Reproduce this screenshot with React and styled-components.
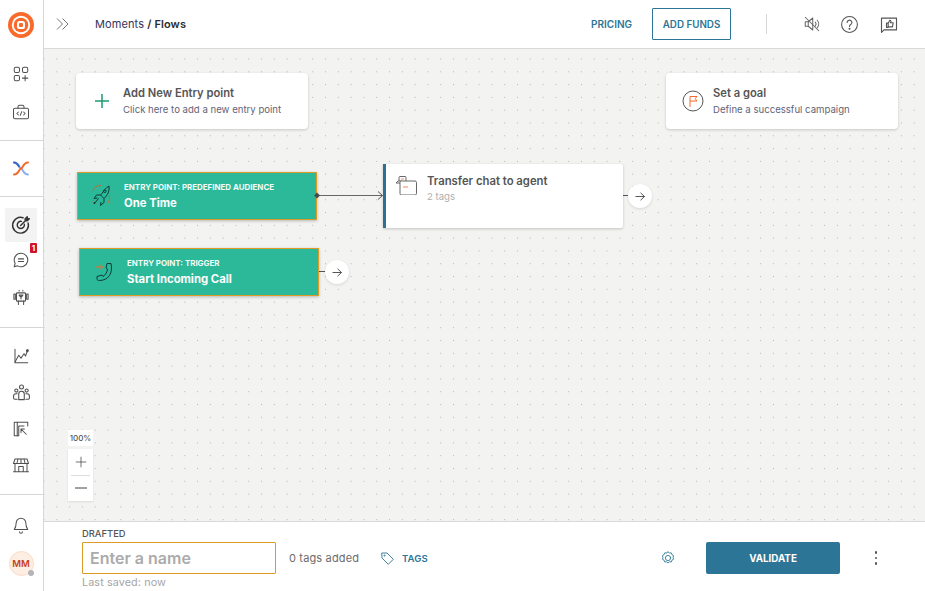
import React from "react";
import styled, { createGlobalStyle } from "styled-components";

const Global = createGlobalStyle`
  html, body { margin: 0; padding: 0; height: 100%; overflow: hidden; background: #fff; }
  #root { height: 100%; }
  * { box-sizing: border-box; }
  body { font-family: Inter, "Liberation Sans", sans-serif; color: #4a4a4a; }
`;

const Shell = styled.div`display: flex; width: 925px; height: 591px;`;
const Sidebar = styled.nav`width: 44px; flex: none; display: flex; flex-direction: column; border-right: 1px solid #d6d6d6; background: #fff;`;
const SideGroup = styled.div`
  height: ${p => p.$h}px; padding-top: ${p => p.$pt || 0}px; flex: none;
  display: flex; flex-direction: column; align-items: center;
  border-bottom: ${p => (p.$last ? "none" : "1px solid #d6d6d6")};
`;
const SideItem = styled.div`
  position: relative; width: 32px; height: ${p => p.$h || 37}px; flex: none; border-radius: 2px;
  display: flex; align-items: center; justify-content: center;
  background: ${p => (p.$active ? "#f3f3f3" : "transparent")};
  margin-left: -1px;
`;
const Badge = styled.span`
  position: absolute; right: 0; top: 1px; width: 7px; height: 10px; border-radius: 1px;
  background: #d0122f; color: #fff; font-size: 8px; font-weight: 700; line-height: 10px; text-align: center;
`;
const Avatar = styled.div`
  position: relative; width: 25px; height: 25px; border-radius: 50%; background: #fdeee3; border: 1px solid #fbdcc6;
  color: #c8431a; font-size: 9.5px; font-weight: 600; display: flex; align-items: center; justify-content: center;
`;
const AvatarDot = styled.span`position: absolute; right: -1px; bottom: -1px; width: 6px; height: 6px; border-radius: 50%; background: #b5b5b5;`;

const Main = styled.div`flex: 1; min-width: 0; display: flex; flex-direction: column;`;
const Header = styled.header`
  height: 49px; flex: none; display: flex; align-items: center; border-bottom: 1px solid #d9d9d9;
  padding: 0 26px 0 12px; background: #fff;
`;
const Collapse = styled.div`width: 13px; height: 14px; display: flex; margin-right: 26px;`;
const Crumbs = styled.div`font-size: 11px; font-weight: 400; color: #34325a; letter-spacing: 0.1px;`;
const CrumbStrong = styled.span`font-weight: 600; color: #2e2e2e;`;
const Spacer = styled.div`flex: 1;`;
const PricingLink = styled.span`font-size: 10px; font-weight: 600; color: #2d7596; margin-right: 20px;`;
const FundsButton = styled.button`
  width: 79px; height: 32px; border: 1px solid #2d7596; border-radius: 1px; background: #fff;
  color: #2d7596; font: 600 9.8px Inter, sans-serif; padding: 0;
`;
const VDivider = styled.div`width: 1px; height: 20px; background: #d6d6d6; margin: 0 25px 0 35px;`;
const HeaderIcon = styled.div`width: 20px; height: 20px; display: flex; align-items: center; justify-content: center; margin-left: ${p => p.$ml || 0}px;`;

const Canvas = styled.div`
  position: relative; flex: 1; min-height: 0; overflow: hidden; background-color: #f3f3f2;
  background-image: radial-gradient(circle at center, #b4b4b4 0.6px, transparent 0.8px);
  background-size: 12.8px 12.8px; background-position: 6.4px 3.6px;
`;
const InfoCard = styled.div`
  position: absolute; left: ${p => p.$x}px; top: 24px; width: 232px; height: 56px; background: #fff; border-radius: 4px;
  box-shadow: 0 1px 3px rgba(0,0,0,.18); display: flex; align-items: center; padding-left: ${p => p.$pl}px; gap: ${p => p.$gap}px;
`;
const InfoTitle = styled.div`font-size: 11.2px; font-weight: 600; color: #555; line-height: 15px;`;
const InfoSub = styled.div`font-size: 9.6px; color: #5f6378; line-height: 15px; margin-top: 1px;`;
const EntryNode = styled.div`
  position: absolute; left: ${p => p.$x}px; top: ${p => p.$y}px; width: 240px; height: 48px;
  background: #2bb999; border: 1px solid #dc9a26; box-shadow: 0 1px 3px rgba(0,0,0,.25);
  display: flex; align-items: center; padding-left: ${p => p.$pl}px; gap: ${p => p.$gap}px; color: #fff;
`;
const EntryLabel = styled.div`font-size: 7.95px; font-weight: 700; line-height: 10px; white-space: nowrap; opacity: .95;`;
const EntryName = styled.div`font-size: 11.3px; font-weight: 700; line-height: 14px; margin-top: 4px;`;
const ActionNode = styled.div`
  position: absolute; left: 339px; top: 115px; width: 240px; height: 64px; background: #fff; border-left: 3px solid #2d6f95;
  box-shadow: 0 1px 3px rgba(0,0,0,.2); border-radius: 0 2px 2px 0; display: flex; padding: 10px 0 0 9px; gap: 10px;
`;
const ActionIcon = styled.div`margin-top: 2px; height: 19px;`;
const ActionTitle = styled.div`font-size: 11.3px; font-weight: 600; color: #555; line-height: 15px;`;
const ActionSub = styled.div`font-size: 9.6px; color: #b0b0b0; line-height: 15px;`;
const NextButton = styled.div`
  position: absolute; left: ${p => p.$x}px; top: ${p => p.$y}px; width: 24px; height: 24px; border-radius: 50%;
  background: #fff; box-shadow: 0 1px 3px rgba(0,0,0,.12); display: flex; align-items: center; justify-content: center;
`;
const Wires = styled.svg`position: absolute; left: 0; top: 0; width: 881px; height: 472px; pointer-events: none;`;
const ZoomPct = styled.div`
  position: absolute; left: 24px; top: 381px; width: 25px; height: 16px; background: #fff;
  font-size: 8px; font-weight: 500; color: #555; text-align: center; line-height: 16px;
`;
const ZoomBox = styled.div`
  position: absolute; left: 24px; top: 400px; width: 25px; height: 52px; background: #fff;
  box-shadow: 0 1px 2px rgba(0,0,0,.1); display: flex; flex-direction: column; align-items: center;
`;
const ZoomBtn = styled.div`flex: 1; width: 100%; display: flex; align-items: center; justify-content: center;`;
const ZoomRule = styled.div`width: 19px; height: 1px; background: #ddd;`;

const Footer = styled.footer`
  height: 70px; flex: none; background: #fff; border-top: 1px solid #d9d9d9; display: flex; align-items: flex-start;
  padding: 6px 42px 0 38px;
`;
const NameCol = styled.div`width: 194px; flex: none; display: flex; flex-direction: column;`;
const Drafted = styled.div`font-size: 9.4px; font-weight: 500; color: #555; line-height: 11px; margin-bottom: 3px;`;
const NameInput = styled.input`
  width: 194px; height: 32px; border: 1px solid #dc9a26; border-radius: 1px; outline: none; padding: 0 7px;
  font: 600 16px Inter, sans-serif; color: #444;
  &::placeholder { color: #ababab; opacity: 1; }
`;
const Saved = styled.div`font-size: 10.8px; color: #a6a6a6; line-height: 13px; margin-top: 2px; letter-spacing: .1px;`;
const FooterRow = styled.div`flex: 1; display: flex; align-items: center; height: 32px; margin-top: 14px; padding-left: 13px;`;
const TagCount = styled.span`font-size: 11px; color: #6b6b6b; margin-right: 22px; letter-spacing: .15px;`;
const TagsLink = styled.span`display: flex; align-items: center; gap: 8px; font-size: 9.6px; font-weight: 600; color: #2d7596;`;
const ValidateButton = styled.button`
  width: 134px; height: 32px; border: none; border-radius: 2px; background: #2d7596; color: #fff;
  font: 700 9.8px Inter, sans-serif; margin-left: 31px; margin-right: 29px; padding: 0;
`;
const Kebab = styled.div`display: flex; flex-direction: column; gap: 3px; width: 14px; align-items: center;`;
const KebabDot = styled.span`width: 2.4px; height: 2.4px; border-radius: 50%; background: #555;`;

const Ico = ({ s = 18, c = "#4f4f4f", w = 1.35, children, box = 24 }) => (
  <svg width={s} height={s} viewBox={`0 0 ${box} ${box}`} fill="none" stroke={c} strokeWidth={w} strokeLinecap="round" strokeLinejoin="round">{children}</svg>
);

const Logo = () => (
  <svg width="26" height="26" viewBox="0 0 26 26" fill="none">
    <circle cx="13" cy="13" r="13" fill="#f96a2a" />
    <circle cx="13" cy="13" r="9.2" fill="#fff" />
    <circle cx="13" cy="13" r="7.3" fill="#f96a2a" />
    <rect x="9" y="9" width="8" height="8" rx="2.6" fill="#fff" />
    <rect x="11" y="11" width="4" height="4" rx="1" fill="#f96a2a" />
  </svg>
);

const GridPlus = () => (
  <Ico s={18}><rect x="3" y="3" width="7" height="7" rx="2" /><rect x="14" y="3" width="7" height="7" rx="2" /><rect x="3" y="14" width="7" height="7" rx="2" /><path d="M17.5 14v7M14 17.5h7" /></Ico>
);
const CodeCase = () => (
  <Ico s={18}><rect x="2" y="7" width="20" height="14" rx="2" /><path d="M8 7V5a2 2 0 0 1 2-2h4a2 2 0 0 1 2 2v2" /><path d="M8.5 12 6.5 14l2 2M15.5 12l2 2-2 2M13 11.5 11 16.5" /></Ico>
);
const Crossflow = () => (
  <svg width="16" height="15" viewBox="0 0 16 15" fill="none" strokeWidth="2" strokeLinecap="round">
    <path d="M1 1.5C6 1.5 6 7.5 8 7.5S10 13.5 15 13.5" stroke="#8fb0ef" />
    <path d="M15 1.5C10 1.5 10 7.5 8 7.5" stroke="#f4692c" />
    <path d="M8 7.5C6 7.5 6 13.5 1 13.5" stroke="#f4692c" />
    <path d="M1 1.5C4 1.5 5 4 6 5.5" stroke="#3f64c8" />
  </svg>
);
const Target = () => (
  <Ico s={20} c="#333" w={1.7}><path d="M20.5 9.5A9.5 9.5 0 1 1 14.5 3.3" /><path d="M16 11a4.3 4.3 0 1 1-3.5-3.4" /><path d="M11.5 12.5 19 5M17 4.5V7h2.5L22 4.5h-2.5V2Z" /></Ico>
);
const Chat = () => (
  <Ico s={18}><path d="M12 3a9 9 0 1 1-4.500 16.800L3 21l1.200-4.500A9 9 0 0 1 12 3Z" /><path d="M8.5 10.5h7M8.5 14h7" /></Ico>
);
const Bot = () => (
  <Ico s={18}><rect x="6" y="6.5" width="12" height="11" rx="1" /><rect x="2.5" y="8" width="2" height="7" /><rect x="19.5" y="8" width="2" height="7" /><path d="M8.5 17.5V22M15.5 17.5V22M9.5 3v1M14.5 3v1M9.5 9.5h5l-1.500 2h-2ZM12 11.5v3" /></Ico>
);
const Chart = () => (
  <Ico s={18}><path d="M4 3v18h17" /><path d="M4 20 9 11l3 4 4-6 2 3 3-8" /><circle cx="20.5" cy="5" r="1.2" fill="#555" /></Ico>
);
const People = () => (
  <Ico s={19}>
    <circle cx="12" cy="5" r="2.5" />
    <path d="M8.5 21v-7a3.500 3.500 0 0 1 7 0v7Z" />
    <circle cx="5.5" cy="9.5" r="2" />
    <circle cx="18.5" cy="9.5" r="2" />
    <path d="M6.5 13.5H5A3 3 0 0 0 2 16.5V19a1.500 1.500 0 0 0 1.500 1.500h3M17.5 13.5H19a3 3 0 0 1 3 3V19a1.500 1.500 0 0 1-1.500 1.500h-3" />
  </Ico>
);
const Board = () => (
  <Ico s={18}><path d="M21 8V3H3v18h6V8h7" /><path d="M7 3v18M12 12l7 7M12 12v4.5M12 12h4.5" /></Ico>
);
const Store = () => (
  <Ico s={18}><path d="M4 4h16l2 6H2Z" /><path d="M8 4 6.5 10M12 4v6M16 4l1.500 6M4 10v11h16V10M9 21v-7h6v7M2 21h20" /></Ico>
);
const Bell = () => (
  <Ico s={18}><path d="M12 3a6.500 6.500 0 0 0-6.500 6.500c0 5-1.500 7-2.500 8.500h18c-1-1.500-2.500-3.500-2.500-8.500A6.500 6.500 0 0 0 12 3Z" /><path d="M10 21a2 2 0 0 0 4 0" /></Ico>
);
const Chevrons = () => (
  <svg width="13" height="14" viewBox="0 0 13 14" fill="none" stroke="#666" strokeWidth="0.9"><path d="M1 1.5 6.5 7 1 12.5M6.5 1.5 12 7l-5.500 5.500" /></svg>
);
const Mute = () => (
  <Ico s={18} c="#666"><path d="M3 9v6h4l6 5V4L7 9Z" /><path d="M7 9v6M16.5 9.5a4 4 0 0 1 0 5M19 7a7.500 7.500 0 0 1 0 10M3 3l18 18" /></Ico>
);
const Help = () => (
  <Ico s={19} c="#555"><circle cx="12" cy="12" r="10" /><path d="M9 9.5a3 3 0 1 1 4.500 2.600c-1 .6-1.500 1.100-1.500 2.400" /><circle cx="12" cy="17.5" r=".6" fill="#555" /></Ico>
);
const Feedback = () => (
  <Ico s={20} c="#555"><path d="M3 5h18v14H6l-3 3Z" /><path d="M9 11h2v5H9ZM11 11l2-3.500c1 0 1.500.8 1.200 1.800l-.4 1.200H17l-.8 5H11" /></Ico>
);
const Plus = ({ c = "#1f9a72", s = 16, w = 1.5 }) => (
  <svg width={s} height={s} viewBox="0 0 16 16" fill="none" stroke={c} strokeWidth={w}><path d="M8 1v14M1 8h14" /></svg>
);
const Flag = () => (
  <svg width="22" height="22" viewBox="0 0 22 22" fill="none">
    <circle cx="11" cy="11" r="10" stroke="#444" strokeWidth="0.9" />
    <path d="M8 17V6.5h7l-1.800 2.200L15 11H8" stroke="#f4692c" strokeWidth="1" />
  </svg>
);
const Rocket = () => (
  <svg width="20" height="24" viewBox="0 0 20 24" fill="none" strokeWidth="1" strokeLinejoin="round">
    <path d="M2 7A8 8 0 0 1 10 1.5M18.500 11a9 9 0 0 1-1.500 8M5 20a8 8 0 0 1-3.500-3" stroke="#c9692d" />
    <path d="M18 2c.5 4-.5 8-3.500 11l-1.500 1.500-3.500-3.500L11 9.5C13 6.500 15 3.500 18 2Z" stroke="#0e3b36" />
    <circle cx="13.8" cy="7.2" r="1.3" stroke="#0e3b36" />
    <path d="M9.5 11 5.5 11 3 14.5l3.500-.5M13 14.5V18.5L9.500 21.500l.5-3.500M7.500 14.500 3 20l.5-2" stroke="#0e3b36" />
  </svg>
);
const Phone = () => (
  <svg width="20" height="20" viewBox="0 0 20 20" fill="none" strokeWidth="1">
    <path d="M1.5 5h7M6 2.500 8.500 5 6 7.500" stroke="#f4692c" />
    <path d="M13 1.5h4c1 5 .5 9-1.500 12S10 18.500 5.500 18.500c-1.500 0-2.500-.5-2.500-1.500v-2.500l5-1.500 1 1.500c2-1 4-3.500 4.500-7.500L12 6Z" stroke="#0e3b36" strokeLinejoin="round" />
  </svg>
);
const Transfer = () => (
  <svg width="22" height="19" viewBox="0 0 22 19" fill="none" stroke="#555" strokeWidth="0.9">
    <path d="M4 5V1.5a1 1 0 0 1 1-1h5a1 1 0 0 1 1 1V5" />
    <path d="M1 7 3 5h4M1 7h4" />
    <rect x="5" y="5" width="16.5" height="14" rx="1.5" fill="#fff" />
    <path d="M6 3h3" stroke="#f9a27a" strokeWidth="1.3" />
    <path d="M8 11h5" stroke="#f9a27a" strokeWidth="1.3" />
  </svg>
);
const Arrow = () => (
  <svg width="10" height="9" viewBox="0 0 10 9" fill="none" stroke="#444" strokeWidth="0.9"><path d="M0.5 4.5h9M5.5 .8 9.5 4.5l-4 3.700" /></svg>
);
const Tag = () => (
  <svg width="13" height="13" viewBox="0 0 13 13" fill="none" stroke="#2d7596" strokeWidth="0.9" strokeLinejoin="round"><path d="M.7 1h5.300l6.300 6.300-5 5L1 6Z" /><circle cx="3.5" cy="3.5" r=".6" /></svg>
);
const Gear = () => (
  <Ico s={14} c="#2d7596" w={1.5}><path d="m12 1.500 2.500 2 3.200-.3 1 3 2.800 1.600-.8 3.200.8 3.200-2.800 1.600-1 3-3.200-.3-2.500 2-2.500-2-3.200.3-1-3-2.800-1.600.8-3.200-.8-3.200 2.800-1.600 1-3 3.200.3Z" /><circle cx="12" cy="12" r="4.5" /></Ico>
);

export default function App() {
  return (
    <Shell>
      <Global />
      <Sidebar>
        <SideGroup $h={141} $pt={0}>
          <SideItem $h={49}><Logo /></SideItem>
          <SideItem $h={6} />
          <SideItem $h={38}><GridPlus /></SideItem>
          <SideItem $h={38}><CodeCase /></SideItem>
        </SideGroup>
        <SideGroup $h={56} $pt={8}>
          <SideItem $h={38}><Crossflow /></SideItem>
        </SideGroup>
        <SideGroup $h={131} $pt={11}>
          <SideItem $h={34} $active><Target /></SideItem>
          <SideItem $h={36}>
            <Chat />
            <Badge>1</Badge>
          </SideItem>
          <SideItem $h={38}><Bot /></SideItem>
        </SideGroup>
        <SideGroup $h={167} $pt={9}>
          <SideItem $h={37}><Chart /></SideItem>
          <SideItem $h={37}><People /></SideItem>
          <SideItem $h={36}><Board /></SideItem>
          <SideItem $h={36}><Store /></SideItem>
        </SideGroup>
        <SideGroup $h={96} $pt={11} $last>
          <SideItem $h={37}><Bell /></SideItem>
          <SideItem $h={41}><Avatar>MM<AvatarDot /></Avatar></SideItem>
        </SideGroup>
      </Sidebar>
      <Main>
        <Header>
          <Collapse><Chevrons /></Collapse>
          <Crumbs>Moments <CrumbStrong>/ Flows</CrumbStrong></Crumbs>
          <Spacer />
          <PricingLink>PRICING</PricingLink>
          <FundsButton>ADD FUNDS</FundsButton>
          <VDivider />
          <HeaderIcon $ml={10}><Mute /></HeaderIcon>
          <HeaderIcon $ml={17}><Help /></HeaderIcon>
          <HeaderIcon $ml={20}><Feedback /></HeaderIcon>
        </Header>
        <Canvas>
          <InfoCard $x={32} $pl={18} $gap={13}>
            <Plus />
            <div>
              <InfoTitle>Add New Entry point</InfoTitle>
              <InfoSub>Click here to add a new entry point</InfoSub>
            </div>
          </InfoCard>
          <InfoCard $x={622} $pl={16} $gap={9}>
            <Flag />
            <div>
              <InfoTitle>Set a goal</InfoTitle>
              <InfoSub>Define a successful campaign</InfoSub>
            </div>
          </InfoCard>
          <Wires viewBox="0 0 881 472" fill="none">
            <path d="M273 146.5H338" stroke="#666" strokeWidth="1" />
            <path d="M334 142.5 338.5 146.5 334 150.5" stroke="#444" strokeWidth="0.9" />
            <path d="M579 146.5H586M275 222.5H283" stroke="#555" strokeWidth="1" />
          </Wires>
          <EntryNode $x={33} $y={123} $pl={13} $gap={13}>
            <Rocket />
            <div>
              <EntryLabel>ENTRY POINT: PREDEFINED AUDIENCE</EntryLabel>
              <EntryName>One Time</EntryName>
            </div>
          </EntryNode>
          <Wires viewBox="0 0 881 472" fill="none">
            <path d="M273 143.5 276 146.5 273 149.5 270 146.5Z" fill="#4a4a4a" />
          </Wires>
          <EntryNode $x={35} $y={199} $pl={14} $gap={13}>
            <Phone />
            <div>
              <EntryLabel>ENTRY POINT: TRIGGER</EntryLabel>
              <EntryName>Start Incoming Call</EntryName>
            </div>
          </EntryNode>
          <ActionNode>
            <ActionIcon><Transfer /></ActionIcon>
            <div>
              <ActionTitle>Transfer chat to agent</ActionTitle>
              <ActionSub>2 tags</ActionSub>
            </div>
          </ActionNode>
          <NextButton $x={584} $y={135}><Arrow /></NextButton>
          <NextButton $x={281} $y={211}><Arrow /></NextButton>
          <ZoomPct>100%</ZoomPct>
          <ZoomBox>
            <ZoomBtn><Plus c="#444" s={12} w={1} /></ZoomBtn>
            <ZoomRule />
            <ZoomBtn><svg width="12" height="2" viewBox="0 0 12 2"><path d="M0 1h12" stroke="#444" strokeWidth="1" /></svg></ZoomBtn>
          </ZoomBox>
        </Canvas>
        <Footer>
          <NameCol>
            <Drafted>DRAFTED</Drafted>
            <NameInput placeholder="Enter a name" />
            <Saved>Last saved: now</Saved>
          </NameCol>
          <FooterRow>
            <TagCount>0 tags added</TagCount>
            <TagsLink><Tag />TAGS</TagsLink>
            <Spacer />
            <Gear />
            <ValidateButton>VALIDATE</ValidateButton>
            <Kebab><KebabDot /><KebabDot /><KebabDot /></Kebab>
          </FooterRow>
        </Footer>
      </Main>
    </Shell>
  );
}
